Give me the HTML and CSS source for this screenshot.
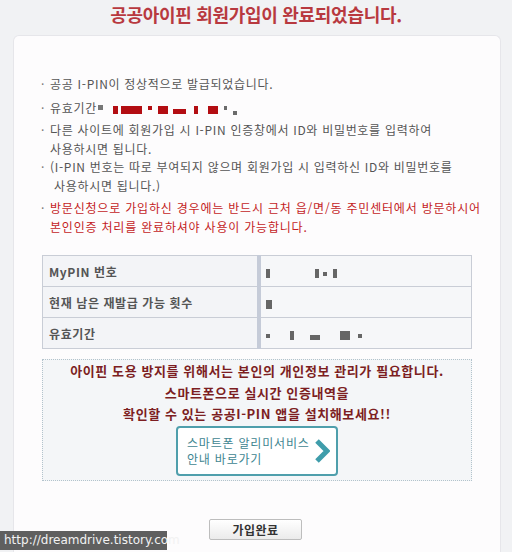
FILE: index.html
```html
<!DOCTYPE html>
<html lang="ko">
<head>
    <meta charset="UTF-8">
    <meta name="viewport" content="width=device-width, initial-scale=1.0">
    <title>공공아이핀 회원가입 완료</title>
    <link rel="stylesheet" href="styles.css">
</head>
<body>
    <h1 class="title">공공아이핀 회원가입이 완료되었습니다.</h1>

    <div class="card">
        <!-- 안내 문구 -->
        <ul class="notes">
            <li class="first">공공 I-PIN이 정상적으로 발급되었습니다.</li>
            <li>유효기간<span class="dot"></span><span class="mask"><i style="width:5px"></i><i style="width:21px;margin-left:3px"></i><i class="s" style="width:4px;margin-left:6px"></i><i style="width:10px;margin-left:6px"></i><i class="low" style="width:13px;margin-left:5px"></i><i style="width:4px;margin-left:8px"></i><i style="width:10px;margin-left:10px"></i><i class="g" style="width:3px;margin-left:6px"></i><i class="g low" style="width:4px;margin-left:6px"></i></span>
            </li>
            <li class="tight">다른 사이트에 회원가입 시 I-PIN 인증창에서 ID와 비밀번호를 입력하여<br>사용하시면 됩니다.</li>
            <li>(I-PIN 번호는 따로 부여되지 않으며 회원가입 시 입력하신 ID와 비밀번호를<br>&nbsp;사용하시면 됩니다.)</li>
            <li class="warn">방문신청으로 가입하신 경우에는 반드시 근처 읍/면/동 주민센터에서 방문하시어<br>본인인증 처리를 완료하셔야 사용이 가능합니다.</li>
        </ul>

        <!-- 발급 정보 -->
        <table class="info">
            <tr>
                <th>MyPIN 번호</th>
                <td><span class="mask"><i style="width:4px;margin-right:45px"></i><i style="width:4px"></i><i class="s" style="width:4px;margin-left:4px"></i><i style="width:4px;margin-left:6px"></i></span></td>
            </tr>
            <tr>
                <th>현재 남은 재발급 가능 횟수</th>
                <td><span class="mask"><i style="width:6px"></i></span></td>
            </tr>
            <tr>
                <th>유효기간</th>
                <td><span class="mask"><i class="s" style="width:4px"></i><i style="width:4px;margin-left:20px"></i><i class="low" style="width:10px;margin-left:16px"></i><i style="width:10px;margin-left:20px"></i><i class="s" style="width:4px;margin-left:8px"></i></span></td>
            </tr>
        </table>

        <!-- 알리미 안내 -->
        <div class="notice">
            <p>아이핀 도용 방지를 위해서는 본인의 개인정보 관리가 필요합니다.<br>스마트폰으로 실시간 인증내역을<br>확인할 수 있는 공공I-PIN 앱을 설치해보세요!!</p>
            <a class="app-link" href="#">
                <span>스마트폰 알리미서비스<br>안내 바로가기</span>
                <svg width="16" height="24" viewBox="0 0 16 24"><path d="M3 2 L13 12 L3 22" fill="none" stroke="#3f9dab" stroke-width="5"/></svg>
            </a>
        </div>

        <div class="actions">
            <button class="done">가입완료</button>
        </div>
    </div>

    <div class="statusbar">http://dreamdrive.tistory.com</div>
</body>
</html>
```

FILE: styles.css
```css
body {
    margin: 0;
    background-color: #f1f2f4;
    font-family: "Noto Sans CJK KR", "Liberation Sans", sans-serif;
    color: #555;
    height: 552px;
    overflow: hidden;
}
.title {
    margin: 0;
    height: 35px;
    line-height: 28px;
    text-align: center;
    font-size: 18px;
    font-weight: bold;
    color: #b8393f;
    letter-spacing: -0.3px;
}
.card {
    box-sizing: border-box;
    margin: 0 11px 0 13px;
    height: 517px;
    background-color: #fdfcfd;
    border: 1px solid #e6e6ea;
    border-bottom: none;
    border-radius: 6px 6px 0 0;
    padding: 39px 30px 0 27px;
}
.notes {
    list-style: none;
    margin: 0;
    padding: 0;
    font-size: 12px;
    line-height: 18.5px;
    color: #555;
}
.notes li {
    position: relative;
    padding-left: 9px;
    margin-bottom: 4px;
    letter-spacing: 0.7px;
    white-space: nowrap;
}
.notes li::before {
    content: "·";
    position: absolute;
    left: 0;
    color: #777;
}
.notes li.first {
    margin-bottom: 5px;
}
.notes li.tight {
    margin-bottom: 0;
}
.notes li.warn {
    color: #c41c1f;
    letter-spacing: 0.8px;
}
.dot {
    display: inline-block;
    width: 5px;
    height: 5px;
    margin-left: 1px;
    vertical-align: 3px;
    background-color: #777;
}
.mask {
    display: inline-flex;
    align-items: flex-start;
    margin-left: 10px;
    vertical-align: -1px;
}
.mask i {
    display: block;
    height: 8px;
    background-color: #b30d12;
}
.mask i.s {
    height: 4px;
}
.mask i.low {
    height: 5px;
    margin-top: 3px;
}
.mask i.g {
    background-color: #6b6b6b;
    height: 4px;
}
.mask i.g.low {
    margin-top: 5px;
}
.info {
    margin: 19px 0 0 1px;
    width: 430px;
    border-collapse: collapse;
    font-size: 12px;
}
.info th,
.info td {
    height: 30px;
    padding: 0 6px;
    border: 1px solid #c9cdd6;
    text-align: left;
}
.info th {
    width: 202px;
    background-color: #f3f4f7;
    font-weight: bold;
    color: #555;
    letter-spacing: 0.6px;
}
.info td {
    background-color: #f6f7f9;
    border-left: 4px solid #c5cbd8;
    padding-left: 5px;
}
.info .mask {
    margin-left: 0;
    vertical-align: middle;
}
.info .mask i {
    background-color: #666;
    height: 9px;
}
.info .mask i.s {
    height: 4px;
    margin-top: 3px;
}
.info .mask i.low {
    height: 5px;
    margin-top: 4px;
}
.notice {
    margin: 10px 0 0 1px;
    width: 428px;
    height: 120px;
    border: 1px dotted #b3c3cc;
    background-color: #f4f6f8;
    text-align: center;
}
.notice p {
    margin: 0;
    font-size: 13px;
    line-height: 21.5px;
    font-weight: bold;
    color: #7c1e22;
    letter-spacing: 0.6px;
}
.app-link {
    display: inline-flex;
    align-items: center;
    justify-content: space-between;
    box-sizing: border-box;
    width: 162px;
    height: 50px;
    margin-top: 1px;
    padding: 0 6px 0 9px;
    border: 2px solid #4f9fac;
    border-radius: 4px;
    background-color: #fff;
    text-decoration: none;
    text-align: left;
    font-size: 12px;
    line-height: 16px;
    letter-spacing: 0.8px;
    color: #3f8691;
}
.actions {
    margin-top: 35px;
    text-align: center;
}
.done {
    width: 93px;
    height: 21px;
    padding: 0;
    border: 1px solid #bdbdbd;
    border-radius: 2px;
    background: linear-gradient(#ffffff, #ebebeb);
    font-family: "Noto Sans CJK KR", sans-serif;
    font-size: 12px;
    font-weight: bold;
    letter-spacing: 0.5px;
    color: #333;
}
.statusbar {
    position: absolute;
    left: 0;
    top: 531px;
    width: 163px;
    height: 19px;
    padding-left: 4px;
    background-color: #5f5f5f;
    color: #f2f2f2;
    font-family: "DejaVu Sans", sans-serif;
    font-size: 12px;
    line-height: 19px;
}
```
